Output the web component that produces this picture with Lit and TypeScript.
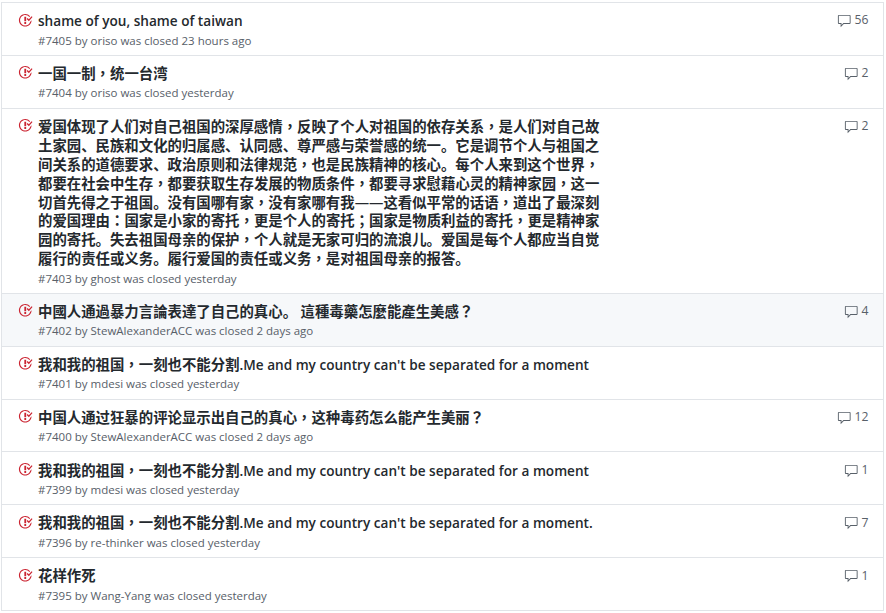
import { LitElement, html, css, svg } from "lit";
import { customElement } from "lit/decorators.js";

const LONG = "爱国体现了人们对自己祖国的深厚感情，反映了个人对祖国的依存关系，是人们对自己故土家园、民族和文化的归属感、认同感、尊严感与荣誉感的统一。它是调节个人与祖国之间关系的道德要求、政治原则和法律规范，也是民族精神的核心。每个人来到这个世界，都要在社会中生存，都要获取生存发展的物质条件，都要寻求慰藉心灵的精神家园，这一切首先得之于祖国。没有国哪有家，没有家哪有我——这看似平常的话语，道出了最深刻的爱国理由：国家是小家的寄托，更是个人的寄托；国家是物质利益的寄托，更是精神家园的寄托。失去祖国母亲的保护，个人就是无家可归的流浪儿。爱国是每个人都应当自觉履行的责任或义务。履行爱国的责任或义务，是对祖国母亲的报答。";

interface Row { title: string; num: number; by: string; when: string; c: number; hover?: boolean; long?: boolean; }

const ROWS: Row[] = [
  { title: "shame of you, shame of taiwan", num: 7405, by: "oriso", when: "23 hours ago", c: 56 },
  { title: "一国一制，统一台湾", num: 7404, by: "oriso", when: "yesterday", c: 2 },
  { title: LONG, num: 7403, by: "ghost", when: "yesterday", c: 2, long: true },
  { title: "中國人通過暴力言論表達了自己的真心。 這種毒藥怎麼能產生美感？", num: 7402, by: "StewAlexanderACC", when: "2 days ago", c: 4, hover: true },
  { title: "我和我的祖国，一刻也不能分割.Me and my country can't be separated for a moment", num: 7401, by: "mdesi", when: "yesterday", c: 0 },
  { title: "中国人通过狂暴的评论显示出自己的真心，这种毒药怎么能产生美丽？", num: 7400, by: "StewAlexanderACC", when: "2 days ago", c: 12 },
  { title: "我和我的祖国，一刻也不能分割.Me and my country can't be separated for a moment", num: 7399, by: "mdesi", when: "yesterday", c: 1 },
  { title: "我和我的祖国，一刻也不能分割.Me and my country can't be separated for a moment.", num: 7396, by: "re-thinker", when: "yesterday", c: 7 },
  { title: "花样作死", num: 7395, by: "Wang-Yang", when: "yesterday", c: 1 },
];

const closedIcon = svg`<path fill-rule="evenodd" d="M7 10h2v2H7v-2zm2-6H7v5h2V4zm1.5 1.5l-1 1L12 9l4-4.5-1-1-3 3.5-1.5-1.5zM8 13.7A5.71 5.71 0 0 1 2.3 8c0-3.14 2.56-5.7 5.7-5.7 1.83 0 3.45.88 4.5 2.2l.92-.92A6.947 6.947 0 0 0 8 1C4.14 1 1 4.14 1 8s3.14 7 7 7 7-3.14 7-7l-1.52 1.52c-.66 2.41-2.86 4.18-5.48 4.18z"/>`;
const commentIcon = svg`<path fill-rule="evenodd" d="M14 1H2c-.55 0-1 .45-1 1v8c0 .55.45 1 1 1h2v3.5L7.5 11H14c.55 0 1-.45 1-1V2c0-.55-.45-1-1-1zm0 9H7l-2 2v-2H2V2h12v8z"/>`;

/* Latin runs are set smaller than CJK runs, and full-width punctuation uses the centred TC forms. */
function runs(text: string) {
  return text.split(/([\x00-\x7f]+|[，；：？])/).filter(Boolean).map(s =>
    /^[\x00-\x7f]/.test(s) ? html`<span class="lat">${s}</span>`
    : /^[，；：？]/.test(s) ? html`<span class="punc">${s}</span>`
    : s);
}

@customElement("app-root")
export class AppRoot extends LitElement {
  static styles = css`
    :host { display: block; width: 886px; height: 613px; overflow: hidden; background: #fff; font-family: "Open Sans", "Noto Sans CJK SC", sans-serif; }
    .list { margin: 2px 2px 0 1px; border: 1px solid #e1e4e8; border-bottom: 0; }
    .row { display: flex; align-items: flex-start; box-sizing: border-box; padding: 9.2px 14.5px 5.25px 16px; border-bottom: 1px solid #e1e4e8; }
    .row.hover { background: #f6f8fa; }
    .state { flex: none; width: 14.5px; height: 14.5px; fill: #cb2431; margin-top: 0.4px; margin-right: 5.5px; }
    .main { flex: 1; min-width: 0; }
    .title { font-size: 14.4px; line-height: 18.9px; font-weight: 600; color: #24292e; }
    .title.long { width: 570px; }
    .lat { font-size: 13.6px; line-height: 0; }
    .punc { font-family: "Noto Sans CJK TC", sans-serif; line-height: 0; }
    .meta { font-size: 11.5px; line-height: 18px; color: #586069; margin-top: 0.5px; }
    .count { flex: none; display: flex; align-items: center; gap: 4.5px; font-size: 12.2px; line-height: 16px; color: #586069; }
    .count svg { width: 14.5px; height: 14.5px; fill: #586069; margin-top: 2px; margin-right: -1px; }
  `;
  render() {
    return html`<div class="list">${ROWS.map(r => html`
      <div class="row ${r.hover ? "hover" : ""}">
        <svg class="state" viewBox="0 0 16 16">${closedIcon}</svg>
        <div class="main">
          <div class="title ${r.long ? "long" : ""}">${runs(r.title)}</div>
          <div class="meta">#${r.num} by ${r.by} was closed ${r.when}</div>
        </div>
        ${r.c ? html`<div class="count"><svg viewBox="0 0 16 16">${commentIcon}</svg>${r.c}</div>` : ""}
      </div>`)}</div>`;
  }
}
